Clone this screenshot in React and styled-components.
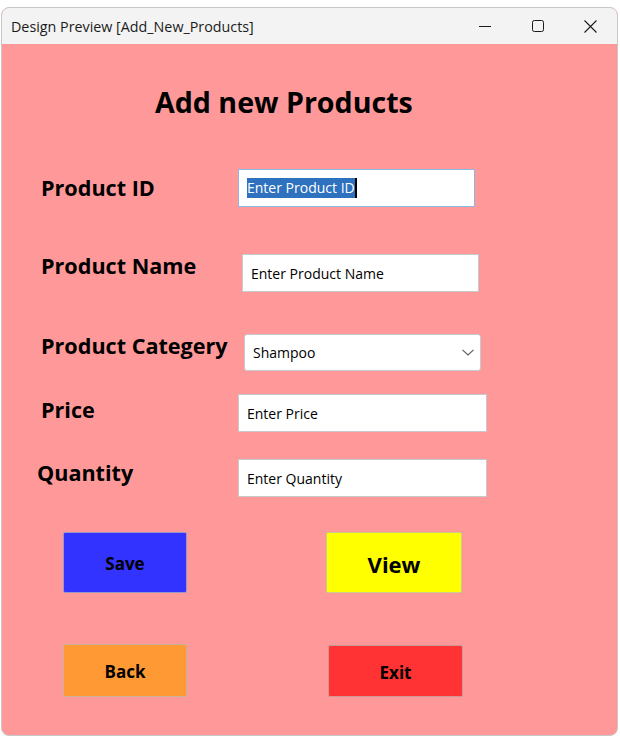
import React from "react";
import styled, { createGlobalStyle } from "styled-components";

const GlobalStyle = createGlobalStyle`
  html, body { margin: 0; padding: 0; background: #ffffff; }
  body { font-family: "Open Sans", "Noto Sans", sans-serif; }
  * { box-sizing: border-box; }
`;

const Window = styled.div`
  margin: 7px 0 0 1px;
  width: 617px;
  height: 729px;
  border: 1px solid #c8c8c8;
  border-radius: 8px;
  overflow: hidden;
  display: flex;
  flex-direction: column;
  background: #ff9999;
`;

const TitleBar = styled.div`
  flex: 0 0 36px;
  display: flex;
  align-items: center;
  background: #f3f3f3;
`;

const TitleText = styled.div`
  flex: 1;
  padding-left: 9px;
  font-size: 14.3px;
  color: #1b1b1b;
  white-space: nowrap;
`;

const CaptionButton = styled.div`
  width: 53px;
  height: 36px;
  display: flex;
  align-items: center;
  justify-content: center;
  color: #1b1b1b;
`;

const Content = styled.main`
  flex: 1;
  display: flex;
  flex-direction: column;
  padding-top: 38px;
`;

const Heading = styled.h1`
  margin: 0;
  padding-left: 153px;
  font-size: 28.6px;
  font-weight: 700;
  line-height: 40px;
  color: #000;
`;

const FieldRow = styled.div`
  display: grid;
  grid-template-columns: ${(p) => p.$fieldX}px ${(p) => p.$fieldW}px;
  align-items: center;
  margin-top: ${(p) => p.$gap}px;
`;

const Label = styled.label`
  padding-left: ${(p) => p.$x}px;
  margin-top: ${(p) => -2 * p.$lift}px;
  font-size: 21.6px;
  font-weight: 700;
  line-height: 30px;
  color: #000;
  white-space: nowrap;
`;

const TextBox = styled.input`
  display: block;
  width: 100%;
  height: 38px;
  margin: 0;
  padding: 0 8px;
  border: 1px solid #c6c9cd;
  border-radius: 0;
  background: #fff;
  font-family: inherit;
  font-size: 14px;
  color: #000;
  outline: none;
`;

const FocusedBox = styled.div`
  display: flex;
  align-items: center;
  height: 38px;
  padding: 0 8px;
  border: 1px solid #8cb8e4;
  background: #fff;
  font-size: 14px;
`;

const Selected = styled.span`
  display: inline-block;
  line-height: 20px;
  height: 20px;
  background: #2d71bf;
  color: #fff;
  white-space: nowrap;
`;

const Caret = styled.span`
  display: inline-block;
  width: 2px;
  height: 20px;
  background: #000;
`;

const ComboBox = styled.div`
  display: flex;
  align-items: center;
  justify-content: space-between;
  height: 37px;
  padding: 0 6px 0 8px;
  border: 1px solid #c6c9cd;
  border-radius: 3px;
  background: #fff;
  font-size: 14px;
  color: #000;
`;

const ButtonRow = styled.div`
  display: grid;
  grid-template-columns: ${(p) => p.$first}px ${(p) => p.$second}px;
  column-gap: ${(p) => p.$gap}px;
  align-items: end;
  padding-left: 61px;
  margin-top: ${(p) => p.$top}px;
`;

const ActionButton = styled.button`
  height: ${(p) => p.$h}px;
  margin: 0;
  padding: 2px 0 0;
  background: ${(p) => p.$bg};
  border: 1px solid rgba(185, 185, 185, 0.75);
  border-radius: 2px;
  font-family: inherit;
  font-weight: 700;
  font-size: ${(p) => p.$size}px;
  color: #000;
`;

const Chevron = () => (
  <svg width="12" height="7" viewBox="0 0 12 7" fill="none">
    <polyline points="0.5,0.8 6,6 11.5,0.8" stroke="#5a5a5a" strokeWidth="1.1" />
  </svg>
);

export default function App() {
  return (
    <>
      <GlobalStyle />
      <Window>
        <TitleBar>
          <TitleText>Design Preview [Add_New_Products]</TitleText>
          <CaptionButton>
            <svg width="12" height="12" viewBox="0 0 12 12">
              <line x1="0" y1="6.5" x2="12" y2="6.5" stroke="currentColor" strokeWidth="1" />
            </svg>
          </CaptionButton>
          <CaptionButton>
            <svg width="12" height="12" viewBox="0 0 12 12" fill="none">
              <rect x="0.5" y="0.5" width="11" height="11" rx="1.8" stroke="currentColor" strokeWidth="1" />
            </svg>
          </CaptionButton>
          <CaptionButton>
            <svg width="13" height="13" viewBox="0 0 13 13">
              <path d="M0.5 0.5 L12.5 12.5 M12.5 0.5 L0.5 12.5" stroke="currentColor" strokeWidth="1.1" />
            </svg>
          </CaptionButton>
        </TitleBar>
        <Content>
          <Heading>Add new Products</Heading>

          <FieldRow $gap={47} $fieldX={236} $fieldW={237}>
            <Label $x={39} $lift={0.5}>Product ID</Label>
            <FocusedBox>
              <Selected>Enter Product ID</Selected>
              <Caret />
            </FocusedBox>
          </FieldRow>

          <FieldRow $gap={47} $fieldX={240} $fieldW={237}>
            <Label $x={39} $lift={7.5}>Product Name</Label>
            <TextBox defaultValue="Enter Product Name" />
          </FieldRow>

          <FieldRow $gap={42} $fieldX={242} $fieldW={237}>
            <Label $x={39} $lift={7}>Product Categery</Label>
            <ComboBox>
              <span>Shampoo</span>
              <Chevron />
            </ComboBox>
          </FieldRow>

          <FieldRow $gap={23} $fieldX={236} $fieldW={249}>
            <Label $x={39} $lift={3}>Price</Label>
            <TextBox defaultValue="Enter Price" />
          </FieldRow>

          <FieldRow $gap={27} $fieldX={236} $fieldW={249}>
            <Label $x={35} $lift={5}>Quantity</Label>
            <TextBox defaultValue="Enter Quantity" />
          </FieldRow>

          <ButtonRow $top={35} $first={124} $second={136} $gap={139}>
            <ActionButton $bg="#3333ff" $h={61} $size={17}>Save</ActionButton>
            <ActionButton $bg="#ffff00" $h={61} $size={22}>View</ActionButton>
          </ButtonRow>

          <ButtonRow $top={51} $first={124} $second={135} $gap={141}>
            <ActionButton $bg="#ff9933" $h={53} $size={17}>Back</ActionButton>
            <ActionButton $bg="#ff3333" $h={52} $size={17}>Exit</ActionButton>
          </ButtonRow>
        </Content>
      </Window>
    </>
  );
}
